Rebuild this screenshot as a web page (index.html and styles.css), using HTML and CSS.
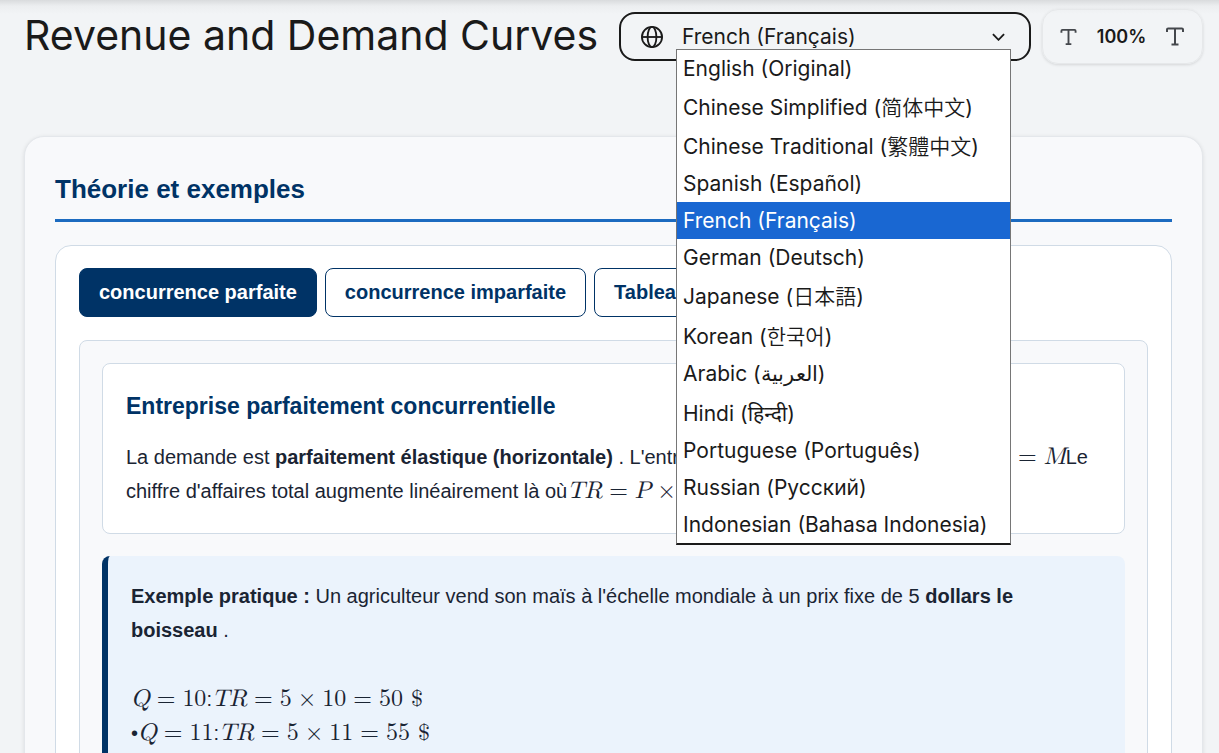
FILE: index.html
```html
<!DOCTYPE html>
<html lang="fr">
<head>
    <meta charset="UTF-8">
    <meta name="viewport" content="width=device-width, initial-scale=1.0">
    <title>Revenue and Demand Curves</title>
    <link rel="stylesheet" href="styles.css">
</head>
<body>
    <header class="page-header">
        <h1>Revenue and Demand Curves</h1>

        <div class="language-picker">
            <svg class="globe" viewBox="0 0 24 24" aria-hidden="true">
                <circle cx="12" cy="12" r="11"/>
                <ellipse cx="12" cy="12" rx="4.8" ry="11"/>
                <path d="M1 12h22"/>
            </svg>
            <select id="language" aria-label="Language">
                <option>English (Original)</option>
                <option selected>French (Français)</option>
            </select>
            <svg class="chevron" viewBox="0 0 14 8" aria-hidden="true">
                <path d="M1 1l6 6 6-6"/>
            </svg>
            <ul class="language-menu" role="listbox" aria-label="Language">
                <li role="option">English (Original)</li>
                <li role="option" class="tall">Chinese Simplified (<span lang="zh-CN">简体中文</span>)</li>
                <li role="option" class="tall">Chinese Traditional (<span lang="zh-TW">繁體中文</span>)</li>
                <li role="option">Spanish (Español)</li>
                <li role="option" class="selected" aria-selected="true">French (Français)</li>
                <li role="option">German (Deutsch)</li>
                <li role="option" class="tall">Japanese (<span lang="ja">日本語</span>)</li>
                <li role="option" class="taller">Korean (<span lang="ko">한국어</span>)</li>
                <li role="option">Arabic (<span lang="ar">العربية</span>)</li>
                <li role="option" class="taller">Hindi (<span lang="hi">हिन्दी</span>)</li>
                <li role="option">Portuguese (Português)</li>
                <li role="option">Russian (Русский)</li>
                <li role="option">Indonesian (Bahasa Indonesia)</li>
            </ul>
        </div>

        <div class="text-size">
            <button type="button" aria-label="Decrease text size">
                <svg class="t-small" viewBox="0 0 18 18" aria-hidden="true">
                    <path d="M1.5 4.5V2.6Q1.5 1.5 2.6 1.5H15.4Q16.5 1.5 16.5 2.6V4.5M9 1.5V16.5M6 16.5H12"/>
                </svg>
            </button>
            <span class="percent">100%</span>
            <button type="button" aria-label="Increase text size">
                <svg class="t-large" viewBox="0 0 18 18" aria-hidden="true">
                    <path d="M1 4.5V2.1Q1 1 2.1 1H15.9Q17 1 17 2.1V4.5M9 1V17M5.5 17H12.5"/>
                </svg>
            </button>
        </div>
    </header>

    <main class="card">
        <h2>Théorie et exemples</h2>

        <section class="panel">
            <div class="tabs">
                <button type="button" class="tab active">concurrence parfaite</button>
                <button type="button" class="tab">concurrence imparfaite</button>
                <button type="button" class="tab">Tableau</button>
            </div>

            <div class="tab-content">
                <article class="theory">
                    <h3>Entreprise parfaitement concurrentielle</h3>
                    <p>La demande est <b>parfaitement élastique (horizontale)</b> . L'entreprise accepte les prix du marché : <span class="math">P<span class="rel">=</span><i>M</i></span>Le chiffre d'affaires total augmente linéairement là où<span class="math"><i>TR</i><span class="rel">=</span><i>P</i><span class="op">×</span><i>Q</i></span>.</p>
                </article>

                <div class="example">
                    <p><b>Exemple pratique :</b> Un agriculteur vend son maïs à l'échelle mondiale à un prix fixe de 5 <b>dollars le boisseau</b> .</p>
                    <p><span class="math"><i>Q</i><span class="rel">=</span>10</span>:<span class="math"><i>TR</i><span class="rel">=</span>5<span class="op">×</span>10<span class="rel">=</span>50 $</span><br>
                    •<span class="math"><i>Q</i><span class="rel">=</span>11</span>:<span class="math"><i>TR</i><span class="rel">=</span>5<span class="op">×</span>11<span class="rel">=</span>55 $</span></p>
                </div>
            </div>
        </section>
    </main>
</body>
</html>
```

FILE: styles.css
```css
html {
    scrollbar-width: none;
}
body {
    margin: 0;
    padding: 9px 16px 24px 24px;
    background: linear-gradient(#d9dbdd, #eceef0 6px, #f2f4f6 14px) no-repeat #f2f4f6;
    color: #1a2433;
    font-family: Arial, "Liberation Sans", sans-serif;
    font-size: 20px;
    line-height: 34px;
}
h1, h2, h3, p, ul {
    margin: 0;
    padding: 0;
}
.page-header {
    display: flex;
    align-items: center;
    gap: 11px;
    height: 55px;
    margin-bottom: 72px;
    color: #1a1a1a;
    font-family: Inter, "Noto Sans", sans-serif;
}
.page-header h1 {
    flex: 1;
    align-self: flex-start;
    font-size: 41px;
    font-weight: 400;
    line-height: 52px;
    white-space: nowrap;
}
.language-picker {
    position: relative;
    display: flex;
    flex: none;
    align-items: center;
    box-sizing: border-box;
    width: 412px;
    height: 49px;
    padding: 0 24px 0 20px;
    border: 2px solid #1a1a1a;
    border-radius: 16px;
}
.language-picker svg {
    flex: none;
    fill: none;
    stroke: #1a1a1a;
    stroke-width: 2;
}
.globe {
    width: 22px;
    height: 22px;
}
.chevron {
    width: 13px;
    height: 8px;
}
.language-picker select {
    flex: 1;
    appearance: none;
    margin: 0;
    padding: 0 0 0 19px;
    border: 0;
    outline: 0;
    background: none;
    color: #1a1a1a;
    font-family: inherit;
    font-size: 21px;
    line-height: 34px;
}
.language-menu {
    position: absolute;
    z-index: 10;
    top: 35px;
    left: 55px;
    width: 333px;
    border: 1px solid #767676;
    border-bottom: 2px solid #1a1a1a;
    background: #fff;
    list-style: none;
    font-family: Inter, "Noto Sans CJK SC", "Noto Sans", sans-serif;
    font-size: 21px;
    line-height: 37px;
    white-space: nowrap;
}
.language-menu li {
    height: 37px;
    padding: 0 6px;
}
.language-menu li.tall {
    padding-top: 2px;
}
.language-menu li.taller {
    padding-top: 3px;
}
.language-menu .selected {
    background: #1967d2;
    color: #fff;
}
.language-menu span[lang^="zh"],
.language-menu span[lang="ja"],
.language-menu span[lang="ko"] {
    font-weight: 350;
}
.text-size {
    display: flex;
    flex: none;
    align-items: center;
    justify-content: space-between;
    box-sizing: border-box;
    width: 161px;
    height: 55px;
    padding: 0 18px 0 17px;
    border: 1px solid #e6e8ea;
    border-radius: 16px;
    box-shadow: 0 1px 3px rgba(0, 0, 0, 0.12);
}
.text-size button {
    display: flex;
    padding: 0;
    border: 0;
    background: none;
    cursor: pointer;
}
.text-size svg {
    fill: none;
    stroke: #44474c;
    stroke-width: 2;
}
.t-small {
    width: 17px;
    height: 18px;
}
.t-large {
    width: 18px;
    height: 19px;
}
.percent {
    font-size: 18px;
    font-weight: 600;
}
.card {
    padding: 30px;
    border: 1px solid #e4e7eb;
    border-radius: 20px;
    background: #f8f9fb;
    box-shadow: 0 1px 4px rgba(0, 0, 0, 0.1);
}
.card h2 {
    padding: 5px 0 13px;
    border-bottom: 3px solid #1c6bc0;
    color: #003366;
    font-size: 26px;
    line-height: 34px;
}
.panel {
    margin-top: 23px;
    padding: 22px 23px;
    border: 1px solid #d0dbe6;
    border-radius: 16px;
    background: #fff;
}
.tabs {
    display: flex;
    gap: 8px;
    margin-bottom: 23px;
}
.tab {
    height: 49px;
    padding: 0 19px;
    border: 1px solid #003366;
    border-radius: 8px;
    background: #fff;
    color: #003366;
    font-family: inherit;
    font-size: 20px;
    font-weight: bold;
    cursor: pointer;
}
.tab.active {
    background: #003366;
    color: #fff;
}
.tab-content {
    padding: 22px;
    border: 1px solid #d0dbe6;
    border-radius: 8px;
    background: #f8f9fb;
}
.theory {
    padding: 25px 23px;
    border: 1px solid #d0dbe6;
    border-radius: 8px;
    background: #fff;
}
.theory h3 {
    margin-bottom: 17px;
    color: #003366;
    font-size: 23px;
}
.example {
    margin-top: 22px;
    padding: 23px;
    border-left: 6px solid #003366;
    border-radius: 8px;
    background: #ebf3fc;
}
.example p + p {
    margin-top: 35px;
}
.math {
    font-family: "Latin Modern Math", "Liberation Serif", serif;
    font-size: 24px;
    line-height: 1;
    white-space: nowrap;
}
.math .rel {
    padding: 0 7px;
}
.math .op {
    padding: 0 6px;
}
```
